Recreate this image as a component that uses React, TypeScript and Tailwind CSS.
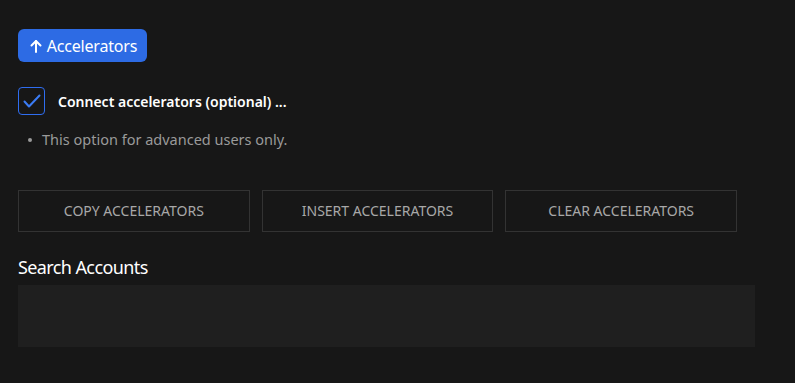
import React from "react";

export default function App() {
  return (
    <div
      className="w-[795px] h-[383px] bg-[#171717] pl-[18px] pt-[29px] overflow-hidden"
      style={{ fontFamily: '"Noto Sans", "Open Sans", sans-serif' }}
    >
      <button className="h-[33px] w-[129px] rounded-[6px] bg-[#2d6be4] text-white text-[16px] flex items-center justify-center gap-[5px] tracking-[-0.2px] pl-[2px]">
        <svg width="12" height="14" viewBox="0 0 12 14" fill="none" stroke="white" strokeWidth="2" strokeLinecap="round" strokeLinejoin="round">
          <path d="M6 13V2" />
          <path d="M1.5 6.5L6 2l4.5 4.5" />
        </svg>
        <span>Accelerators</span>
      </button>

      <div className="mt-[25px] flex items-center h-[28px]">
        <div className="w-[27px] h-[28px] rounded-[4px] border border-[#2f6df0] flex items-center justify-center">
          <svg width="18" height="14" viewBox="0 0 18 14" fill="none" stroke="#3b7cf5" strokeWidth="2" strokeLinecap="round" strokeLinejoin="round">
            <path d="M1.5 7.5l4.5 5L16.5 1.5" />
          </svg>
        </div>
        <span className="ml-[13px] text-white text-[14px] font-semibold">
          Connect accelerators (optional) ...
        </span>
      </div>

      <div className="mt-[14px] flex items-center text-[#9a9a9a] text-[14.5px]">
        <span className="w-[4px] h-[4px] rounded-full bg-[#9a9a9a] ml-[10px] mr-[10px]" />
        <span>This option for advanced users only.</span>
      </div>

      <div className="mt-[39px] w-[719px] flex gap-[12px]">
        {["COPY ACCELERATORS", "INSERT ACCELERATORS", "CLEAR ACCELERATORS"].map((t) => (
          <div
            key={t}
            className="flex-1 h-[42px] border border-[#333333] flex items-center justify-center text-[#a8a8a8] text-[14px]"
          >
            {t}
          </div>
        ))}
      </div>

      <div className="mt-[24px] text-white text-[18px] leading-[22px] tracking-[-0.6px]">Search Accounts</div>

      <div className="mt-[7px] w-[737px] h-[62px] bg-[#1f1f1f]" />
    </div>
  );
}
